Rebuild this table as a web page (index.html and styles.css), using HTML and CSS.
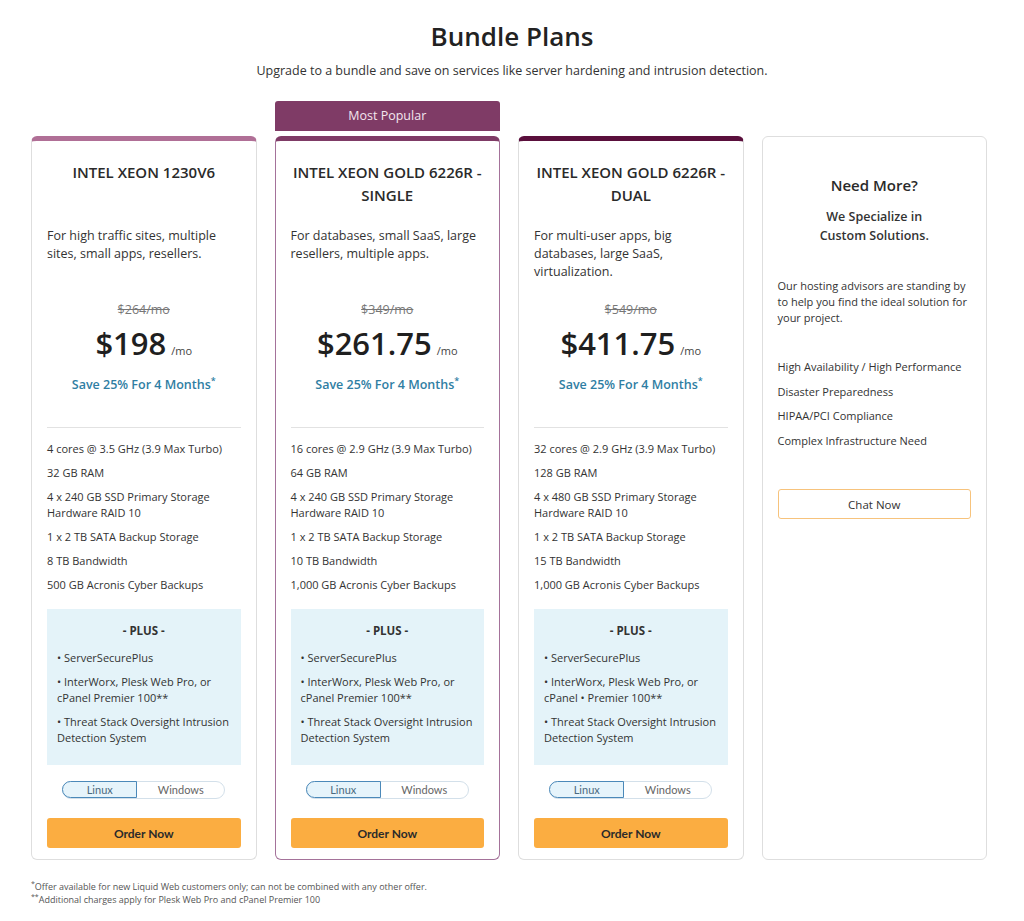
FILE: index.html
```html
<!DOCTYPE html>
<html lang="en">
  <head>
    <meta charset="UTF-8" />
    <meta name="viewport" content="width=device-width, initial-scale=1.0" />
    <title>Bundle Plans</title>
    <link rel="stylesheet" href="styles.css">
  </head>
  <body>
    <header class="intro">
      <h1>Bundle Plans</h1>
      <p>Upgrade to a bundle and save on services like server hardening and intrusion detection.</p>
    </header>

    <main class="plans">
      <div class="col">
        <div class="card card-light">
          <h3>INTEL XEON 1230V6</h3>
          <p class="desc">For high traffic sites, multiple sites, small apps, resellers.</p>
          <p class="old">$264/mo</p>
          <p class="price">$198<span>/mo</span></p>
          <p class="save">Save 25% For 4 Months<sup>*</sup></p>
          <ul class="specs">
            <li>4 cores @ 3.5 GHz (3.9 Max Turbo)</li>
            <li>32 GB RAM</li>
            <li>4 x 240 GB SSD Primary Storage<br />Hardware RAID 10</li>
            <li>1 x 2 TB SATA Backup Storage</li>
            <li>8 TB Bandwidth</li>
            <li>500 GB Acronis Cyber Backups</li>
          </ul>
          <div class="plus">
            <h4>- PLUS -</h4>
            <ul>
              <li>• ServerSecurePlus</li>
              <li>• InterWorx, Plesk Web Pro, or cPanel Premier 100**</li>
              <li>• Threat Stack Oversight Intrusion Detection System</li>
            </ul>
          </div>
          <div class="os">
            <span class="on">Linux</span>
            <span>Windows</span>
          </div>
          <button class="order">Order Now</button>
        </div>
      </div>

      <div class="col col-popular">
        <div class="badge">Most Popular</div>
        <div class="card card-popular">
          <h3>INTEL XEON GOLD 6226R - SINGLE</h3>
          <p class="desc">For databases, small SaaS, large resellers, multiple apps.</p>
          <p class="old">$349/mo</p>
          <p class="price">$261.75<span>/mo</span></p>
          <p class="save">Save 25% For 4 Months<sup>*</sup></p>
          <ul class="specs">
            <li>16 cores @ 2.9 GHz (3.9 Max Turbo)</li>
            <li>64 GB RAM</li>
            <li>4 x 240 GB SSD Primary Storage<br />Hardware RAID 10</li>
            <li>1 x 2 TB SATA Backup Storage</li>
            <li>10 TB Bandwidth</li>
            <li>1,000 GB Acronis Cyber Backups</li>
          </ul>
          <div class="plus">
            <h4>- PLUS -</h4>
            <ul>
              <li>• ServerSecurePlus</li>
              <li>• InterWorx, Plesk Web Pro, or cPanel Premier 100**</li>
              <li>• Threat Stack Oversight Intrusion Detection System</li>
            </ul>
          </div>
          <div class="os">
            <span class="on">Linux</span>
            <span>Windows</span>
          </div>
          <button class="order">Order Now</button>
        </div>
      </div>

      <div class="col">
        <div class="card card-dark">
          <h3>INTEL XEON GOLD 6226R - DUAL</h3>
          <p class="desc">For multi-user apps, big databases, large SaaS, virtualization.</p>
          <p class="old">$549/mo</p>
          <p class="price">$411.75<span>/mo</span></p>
          <p class="save">Save 25% For 4 Months<sup>*</sup></p>
          <ul class="specs">
            <li>32 cores @ 2.9 GHz (3.9 Max Turbo)</li>
            <li>128 GB RAM</li>
            <li>4 x 480 GB SSD Primary Storage<br />Hardware RAID 10</li>
            <li>1 x 2 TB SATA Backup Storage</li>
            <li>15 TB Bandwidth</li>
            <li>1,000 GB Acronis Cyber Backups</li>
          </ul>
          <div class="plus">
            <h4>- PLUS -</h4>
            <ul>
              <li>• ServerSecurePlus</li>
              <li>• InterWorx, Plesk Web Pro, or cPanel • Premier 100**</li>
              <li>• Threat Stack Oversight Intrusion Detection System</li>
            </ul>
          </div>
          <div class="os">
            <span class="on">Linux</span>
            <span>Windows</span>
          </div>
          <button class="order">Order Now</button>
        </div>
      </div>

      <div class="col">
        <div class="card card-custom">
          <h3>Need More?</h3>
          <p class="special">We Specialize in<br />Custom Solutions.</p>
          <p class="advisors">Our hosting advisors are standing by to help you find the ideal solution for your project.</p>
          <ul class="needs">
            <li>High Availability / High Performance</li>
            <li>Disaster Preparedness</li>
            <li>HIPAA/PCI Compliance</li>
            <li>Complex Infrastructure Need</li>
          </ul>
          <button class="chat">Chat Now</button>
        </div>
      </div>
    </main>

    <footer class="notes">
      <p><sup>*</sup>Offer available for new Liquid Web customers only; can not be combined with any other offer.</p>
      <p><sup>**</sup>Additional charges apply for Plesk Web Pro and cPanel Premier 100</p>
    </footer>
  </body>
</html>
```

FILE: styles.css
```css
html {
  font-family: "Open Sans", Arial, sans-serif;
}

body {
  margin: 0;
  background-color: #fff;
  color: #333;
}

p,
ul,
h1,
h3,
h4 {
  margin: 0;
}

ul {
  list-style: none;
  padding: 0;
}

sup {
  line-height: 0;
}

.intro {
  text-align: center;
  padding-top: 18px;
}

.intro h1 {
  font-size: 26px;
  font-weight: 600;
  line-height: 36px;
  color: #222;
}

.intro p {
  font-size: 12.5px;
  line-height: 18px;
  margin-top: 8px;
  color: #333;
}

.plans {
  display: grid;
  grid-template-columns: repeat(4, 1fr);
  gap: 18px;
  width: 956px;
  margin: 21px 0 0 31px;
}

.col {
  display: flex;
  flex-direction: column;
  padding-top: 35px;
}

.col-popular {
  padding-top: 0;
}

.badge {
  height: 30px;
  line-height: 30px;
  margin-bottom: 5px;
  background-color: #7f3b66;
  color: #f3e6ee;
  text-align: center;
  font-size: 12.5px;
  border-radius: 3px 3px 0 0;
}

.card {
  display: flex;
  flex-direction: column;
  border: 1px solid #dedede;
  border-radius: 6px;
  padding: 20px 14px 11px;
  height: 724px;
  box-sizing: border-box;
}

.card-light {
  border-top: 5px solid #b06f96;
}

.card-popular {
  border: 1px solid #a4729a;
  border-top: 5px solid #7f3b66;
}

.card-dark {
  border-top: 5px solid #5a0f3c;
}

.card h3 {
  font-size: 15px;
  font-weight: 600;
  line-height: 23px;
  text-align: center;
  color: #2a2a2a;
  min-height: 46px;
}

.desc {
  font-size: 12.5px;
  line-height: 18px;
  margin: 20px 1px 0;
  min-height: 54px;
}

.old {
  font-size: 12.5px;
  line-height: 18px;
  color: #777;
  text-decoration: line-through;
  text-align: center;
  margin-top: 20px;
}

.price {
  font-size: 31px;
  font-weight: 600;
  line-height: 38px;
  text-align: center;
  color: #1f1f1f;
  margin-top: 5px;
}

.price span {
  font-size: 11px;
  font-weight: 400;
  line-height: 1;
  color: #444;
  margin-left: 5px;
}

.save {
  font-size: 12.5px;
  font-weight: 600;
  line-height: 18px;
  text-align: center;
  color: #2f7ea3;
  margin-top: 14px;
}

.save sup {
  font-size: 9px;
}

.specs {
  border-top: 1px solid #e2e2e2;
  margin: 33px 1px 0;
  padding-top: 13px;
}

.specs li,
.plus li,
.needs li {
  font-size: 11px;
  line-height: 16px;
  margin-bottom: 8px;
}

.plus {
  background-color: #e4f3f9;
  padding: 13px 10px 19px;
  margin: 8px 1px 0;
}

.plus h4 {
  font-size: 11.5px;
  font-weight: 700;
  text-align: center;
  line-height: 18px;
  margin-bottom: 10px;
  color: #333;
}

.plus li:last-child {
  margin-bottom: 0;
}

.os {
  display: flex;
  align-self: center;
  margin-top: auto;
  font-family: Lato, "Open Sans", sans-serif;
  font-size: 11px;
  color: #666;
  border: 1px solid #d3e0ea;
  border-radius: 10px;
  width: 163px;
  height: 18px;
  box-sizing: border-box;
}

.os span {
  flex: 1 1 90px;
  text-align: center;
  line-height: 16px;
}

.os .on {
  flex: 0 0 73px;
  background-color: #e6f4fb;
  border: 1px solid #4b89b9;
  margin: -1px 0 0 -1px;
  border-radius: 10px 0 0 10px;
  color: #4a6a80;
}

.order {
  margin: 19px 1px 0;
  height: 30px;
  border: none;
  border-radius: 3px;
  background-color: #fbad41;
  color: #2a2a2a;
  font-family: Lato, "Open Sans", sans-serif;
  font-size: 12px;
  font-weight: 700;
  cursor: pointer;
}

.card-custom {
  padding: 37px 15px 11px;
}

.card-custom h3 {
  min-height: 0;
}

.special {
  font-size: 12.5px;
  font-weight: 600;
  line-height: 19px;
  text-align: center;
  margin-top: 10px;
  color: #333;
}

.advisors {
  font-size: 11px;
  line-height: 16px;
  margin-top: 33px;
}

.needs {
  margin-top: 33px;
}

.needs li {
  margin-bottom: 8.5px;
}

.chat {
  margin-top: 32px;
  height: 30px;
  background-color: #fff;
  border: 1px solid #f7c37c;
  border-radius: 3px;
  font-family: "Open Sans", Arial, sans-serif;
  font-size: 11.5px;
  color: #333;
  cursor: pointer;
}

.notes {
  padding: 20px 0 0 31px;
}

.notes p {
  font-size: 9px;
  line-height: 13px;
  color: #555;
}

.notes sup {
  font-size: 7px;
}
```
